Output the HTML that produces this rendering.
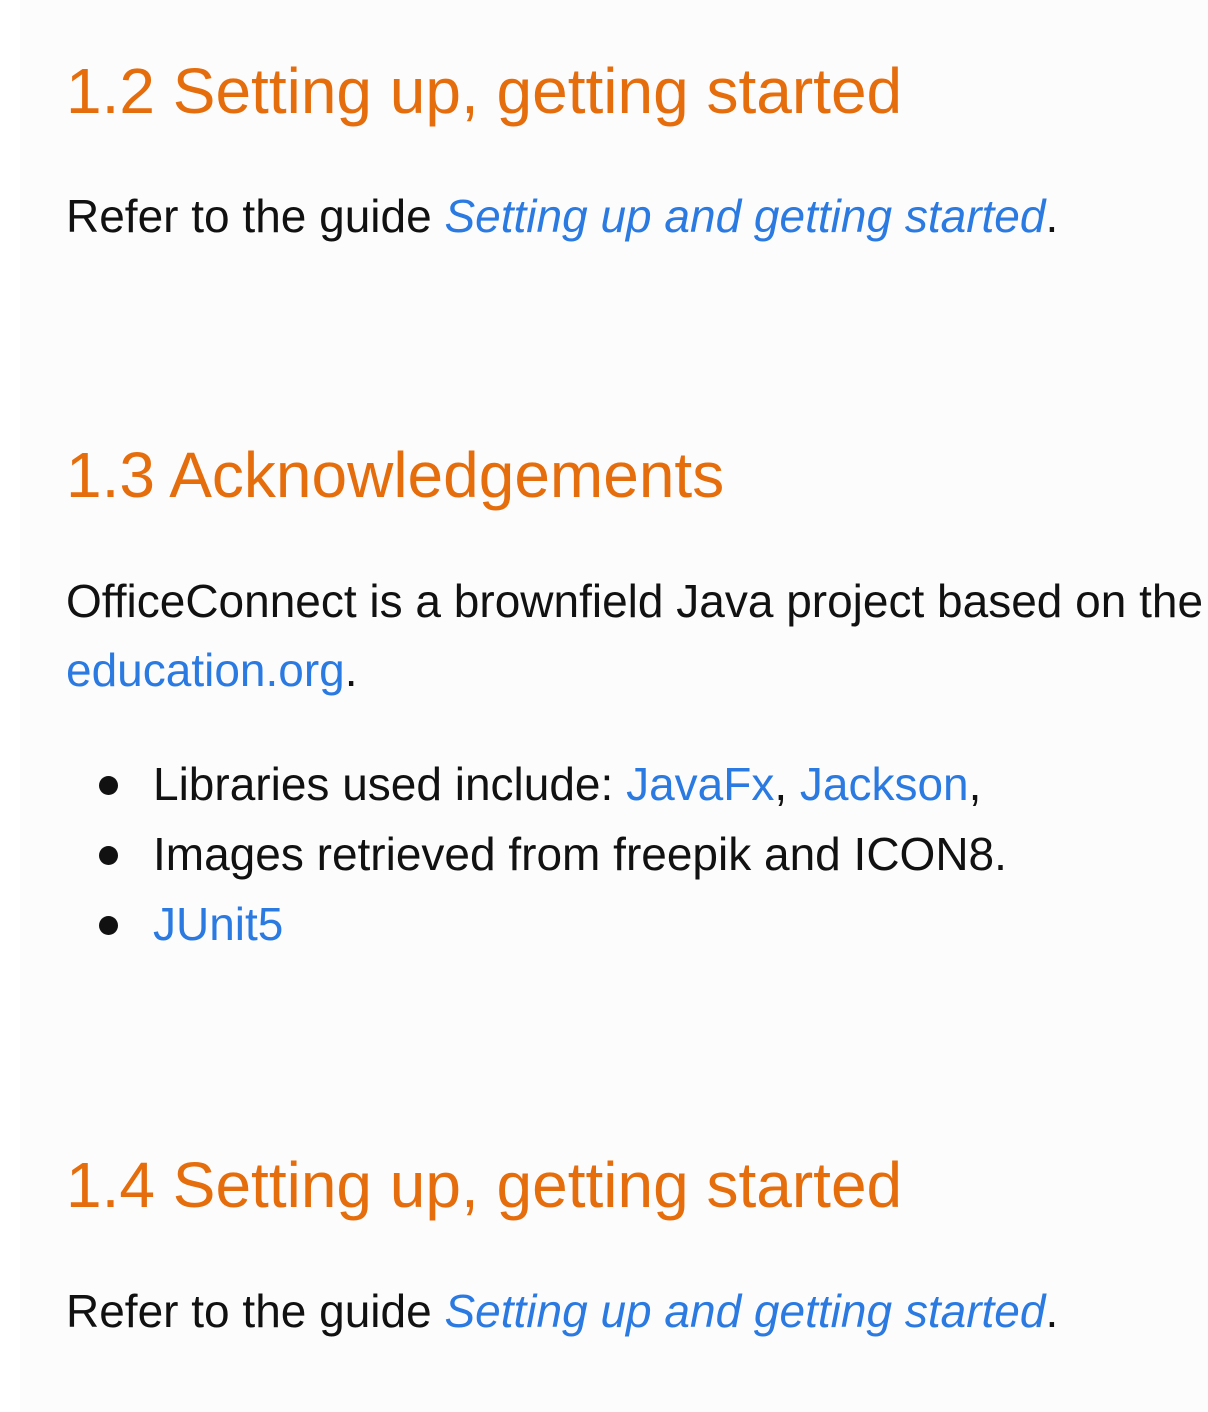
<!DOCTYPE html>
<html><head><meta charset="utf-8"><style>
html,body{margin:0;padding:0;width:1208px;height:1412px;overflow:hidden;background:#fff}
.bg{position:absolute;left:20px;top:0;width:1188px;height:1412px;background:#fcfcfc;overflow:hidden}
.t{position:absolute;left:46px;white-space:nowrap;font-family:"Liberation Sans",sans-serif;line-height:1;color:#111}
.h{font-size:64px;color:#e56d0c}
.p{font-size:46px}
a{color:#2a7ae2;text-decoration:none}
.dot{position:absolute;left:79px;width:19px;height:19px;border-radius:50%;background:#111}
</style></head><body>
<div class="bg">
<div class="t h" style="top:59px">1.2 Setting up, getting started</div>
<div class="t p" style="top:193px">Refer to the guide <a><i>Setting up and getting started</i></a>.</div>
<div class="t h" style="top:443px">1.3 Acknowledgements</div>
<div class="t p" style="top:578px">OfficeConnect is a brownfield Java project based on the AddressBook</div>
<div class="t p" style="top:647px"><a>education.org</a>.</div>
<div class="dot" style="top:776px"></div>
<div class="t p" style="left:133px;top:761px">Libraries used include: <a>JavaFx</a>, <a>Jackson</a>,</div>
<div class="dot" style="top:846px"></div>
<div class="t p" style="left:133px;top:831px">Images retrieved from freepik and ICON8.</div>
<div class="dot" style="top:916px"></div>
<div class="t p" style="left:133px;top:901px"><a>JUnit5</a></div>
<div class="t h" style="top:1153px">1.4 Setting up, getting started</div>
<div class="t p" style="top:1288px">Refer to the guide <a><i>Setting up and getting started</i></a>.</div>
</div>
</body></html>
